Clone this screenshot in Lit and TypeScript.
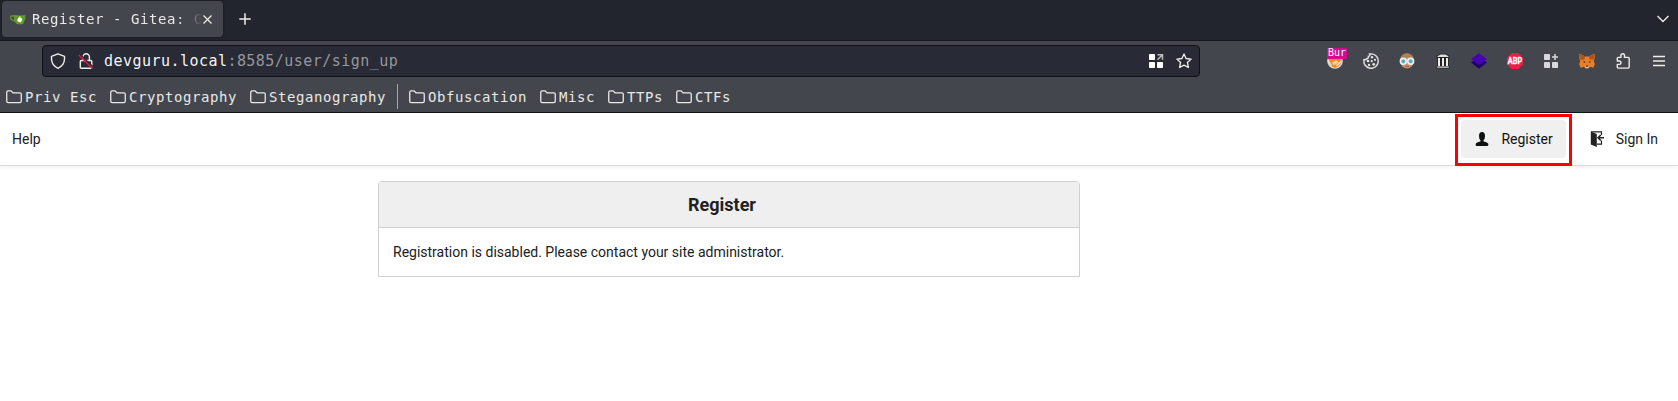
import { LitElement, html, css, svg } from "lit";
import { customElement } from "lit/decorators.js";

const icon = (w: number, h: number, vb: string, body: unknown) =>
  html`<svg width=${w} height=${h} viewBox=${vb} fill="none">${body}</svg>`;

const folder = icon(16, 14, "0 0 16 14", svg`<path d="M.75 11.2V2.3Q.75.9 2.1.9H5l2 1.9h6.9q1.35 0 1.35 1.4v7q0 1.4-1.35 1.4H2.1Q.75 12.6.75 11.2Z" stroke="#e9e9e6" stroke-width="1.3"/>`);

const gitea = icon(16, 11, "0 0 16 11", svg`
  <path d="M5 2H1.600Q.4 2.200.700 4.200 1.200 6.500 5 6.800" stroke="#609926" stroke-width="1.300"/>
  <path d="M4 1q6 .8 11.600 0Q15.800 5 13.600 9q-.6 1.200-2 1.200H7.400Q4.600 9.200 4 5Z" fill="#609926"/>
  <rect x="7.600" y="3.800" width="4.200" height="4.200" rx="1" transform="rotate(22 9.700 5.900)" fill="#fff"/>
  <path d="M9.900 2v3" stroke="#fff" stroke-width=".8"/>`);

const extensions = [
  // Proxy switcher, with its badge
  html`<span class="ext">${icon(16, 16, "0 0 16 16", svg`
    <circle cx="8" cy="8" r="7.800" fill="#d7dbe0"/><path d="M1.200 6.500Q8 3 14.800 6.500 14.600 13 8 15 1.600 13 1.200 6.500Z" fill="#f08a24"/>
    <path d="M.8 7l3.800 5.500M9.500 13l5-5" stroke="#e8eaec" stroke-width="1.300"/><path d="M5 9.600l4-2 2.700 1.300-2.400 2.600-3.300.3z" fill="#fbd09a"/>`)}<span class="badge">Bur</span></span>`,
  icon(16, 16, "0 0 16 16", svg`<path d="M8.300.9A7.200 7.200 0 1 1 1 6.700q1.800.5 2.600-1Q5.800 5.500 5.300 3.400 7.500 3.100 6.500 1Z" stroke="#e3e3e5" stroke-width="1.400"/>
    <g fill="#e3e3e5"><circle cx="9" cy="4.300" r="1.200"/><circle cx="5" cy="8" r="1.300"/><circle cx="12" cy="6.800" r="1.100"/><circle cx="8.700" cy="8.200" r="1.100"/><circle cx="6" cy="12" r="1.200"/><circle cx="10.700" cy="11.300" r="1.400"/></g>`),
  icon(16, 16, "0 0 16 16", svg`<ellipse cx="8" cy="8" rx="6.800" ry="7.500" fill="#c98f6b"/><path d="M1.200 6Q2 .5 8 .5T14.800 6Q8 3 1.200 6Z" fill="#a98452"/>
    <circle cx="4.300" cy="8.300" r="2.900" fill="#68aabd" stroke="#eef4f5" stroke-width="1.600"/><circle cx="11.700" cy="8.300" r="2.900" fill="#68aabd" stroke="#eef4f5" stroke-width="1.600"/><path d="M6 13.300h4" stroke="#a55b43"/>`),
  icon(16, 16, "0 0 16 16", svg`<path d="M1.500 4.600V3L5 .8h6L14.500 3v1.600l-.7.5v7.600l.8.700v2H1.400v-2l.8-.7V5.100z" fill="#222"/><path d="M2.500 3.300L5.500 1.600h5l3 1.700v.6h-11zM2.200 13.600h11.600v1.200H2.200z" fill="#ddd"/><path d="M4 5v8M8 5v8M12 5v8" stroke="#eee" stroke-width="2"/>`),
  icon(16, 16, "0 0 16 16", svg`<path d="M0 9.500L8 4l8 5.500-8 6.200z" fill="#20006e"/><path d="M0 6L8 .3 16 6l-8 5.900z" fill="#4a00b4"/>`),
  icon(16, 16, "0 0 16 16", svg`<path d="M4.700 0h6.600L16 4.700v6.600L11.300 16H4.700L0 11.300V4.700z" fill="#ed1e45"/><text x="8" y="11" font-family="Roboto, sans-serif" font-size="8.500" font-weight="700" fill="#fff" stroke="#fff" stroke-width=".3" text-anchor="middle" textLength="14.400" lengthAdjust="spacingAndGlyphs">ABP</text>`),
  icon(16, 16, "0 0 16 16", svg`<g fill="#d8d8dc"><rect x="1" y="1" width="6" height="6" rx=".8"/><rect x="1" y="9" width="6" height="6" rx=".8"/><rect x="9" y="9" width="6" height="6" rx=".8"/></g><path d="M12 1v6M9 4h6" stroke="#d8d8dc" stroke-width="1.500"/>`),
  icon(16, 16, "0 0 16 16", svg`<path d="M.5.800L6.300 3.500h3.400L15.500.800l.2 4.500-.9 2.700 1 3.100-1.400 3.600-3.500-.9L9.500 15.500h-3L5.100 13.800l-3.500.9L.2 11.100l1-3.100L.3 5.300z" fill="#ed7d22"/><path d="M.5.800L6.300 3.500 5.200 6.800 1 6.500zM15.500.800L9.700 3.500l1.100 3.300 4.200-.3z" fill="#a8571f"/><path d="M3.600 8.800l2.300-.5.400 1.800zM12.400 8.800l-2.300-.5-.4 1.800z" fill="#333b43"/><path d="M6 12.600h4l-.5 2.500h-3z" fill="#d5c6b8"/><path d="M6.600 12.400h2.800l-.5 1.400H7.100z" fill="#222"/>`),
  icon(16, 16, "0 0 16 16", svg`<path d="M5.900 4.400V2.600a1.800 1.800 0 0 1 3.600 0v1.800h3.700q1 0 1 1v8.700q0 1-1 1H3.300q-1 0-1-1v-2.700h2a1.700 1.700 0 0 0 0-3.400h-2V5.400q0-1 1-1z" stroke="#ededea" stroke-width="1.400" stroke-linejoin="round"/>`),
  icon(16, 16, "0 0 16 16", svg`<path d="M2 3.500h12M2 8h12M2 12.500h12" stroke="#ededea" stroke-width="1.300"/>`),
];

@customElement("app-root")
export class AppRoot extends LitElement {
  static styles = css`
    :host { display: block; height: 401px; background: #fff; overflow: hidden; font: 14px/20px Roboto, sans-serif; color: #212121; }
    * { box-sizing: border-box; }
    svg { display: block; flex: none; }
    .tabs, .nav, .bookmarks, .address, .tools, .tab, .site, .item, .mark { display: flex; align-items: center; }
    .tabs, .nav, .bookmarks { font-family: "DejaVu Sans Mono", monospace; color: #e8e8e5; white-space: pre; }
    .tabs { height: 41px; background: #23252e; border-bottom: 1px solid #16181d; padding: 1px 15px 3px 2px; }
    .tab { width: 221px; height: 36px; background: #44464d; border-radius: 4px; padding: 0 10px 0 8px; box-shadow: 0 0 3px #15161c; }
    .title { width: 170px; margin-left: 6px; overflow: hidden; font-size: 14px; letter-spacing: .57px; -webkit-mask-image: linear-gradient(90deg, #000 145px, transparent 170px); mask-image: linear-gradient(90deg, #000 145px, transparent 170px); }
    .plus { margin-left: 16px; }
    .down { margin-left: auto; margin-right: -7px; }
    .nav { height: 40px; background: #44464d; padding: 0 11px 0 42px; }
    .address { width: 1158px; height: 32px; border: 1px solid #101115; border-radius: 4px; background: #282a35; padding: 0 7px; }
    .lock { margin-left: 12px; }
    .url { margin-left: 10px; flex: 1; font-size: 15px; letter-spacing: .46px; color: #96979b; }
    .host { color: #f4f4f2; }
    .star { margin-left: 12px; }
    .tools { margin-left: auto; gap: 20px; }
    .ext { position: relative; }
    .badge { position: absolute; left: 0; top: -5px; width: 20px; height: 11px; background: #d30b90; border-radius: 1px; color: #fff; font: 10px/10px "DejaVu Sans Mono", monospace; text-align: center; }
    .bookmarks { height: 32px; background: #44464d; border-bottom: 1px solid #101115; padding: 0 6px; gap: 13px; font-size: 14px; letter-spacing: .57px; }
    .mark { gap: 3px; }
    .sep { width: 1px; height: 25px; background: #a5a6a9; margin: 0 -2px; }
    .site { height: 53px; border-bottom: 1px solid #dbdbdb; box-shadow: 0 2px 3px rgba(0,0,0,.04); padding: 0 7px 0 12px; }
    .item { height: 38px; border-radius: 4px; padding: 0 13px 0 14px; position: relative; }
    .active { margin-left: auto; margin-right: 10px; background: #f0f0f0; color: #111; }
    .focus { position: absolute; inset: -6px -6.5px -8px -6px; border: 3px solid #f00; }
    .label { margin-left: 12px; }
    .card { width: 702px; margin: 15px 0 0 378px; border: 1px solid #d0d0d1; border-radius: 4px 4px 0 0; }
    h4 { margin: 0; height: 46px; line-height: 46px; padding-right: 14px; font-size: 18px; font-weight: 700; text-align: center; background: #efefef; border-bottom: 1px solid #d0d0d1; border-radius: 3px 3px 0 0; }
    .message { height: 48px; line-height: 48px; padding-left: 14px; }
  `;

  private mark(name: string) {
    return html`<div class="mark">${folder}${name}</div>`;
  }

  render() {
    return html`
      <div class="tabs">
        <div class="tab">${gitea}<div class="title">Register - Gitea: G</div>${icon(11, 11, "0 0 11 11", svg`<path d="M1.500 1.500l8 8m0-8l-8 8" stroke="#ededea" stroke-width="1.200"/>`)}</div>
        <div class="plus">${icon(12, 12, "0 0 12 12", svg`<path d="M6 .3v11.400M.3 6h11.400" stroke="#ededea" stroke-width="1.500"/>`)}</div>
        <div class="down">${icon(14, 10, "0 0 14 10", svg`<path d="M1.500 2l5.500 5.500L12.500 2" stroke="#ededea" stroke-width="1.400"/>`)}</div>
      </div>
      <div class="nav">
        <div class="address">
          ${icon(16, 16, "0 0 16 16", svg`<path d="M8 .8l6.500 2.500v2.800Q14.300 12.500 8 15.300 1.700 12.500 1.500 6.100V3.300z" stroke="#ededea" stroke-width="1.400" stroke-linejoin="round"/>`)}
          <div class="lock">${icon(16, 16, "0 0 16 16", svg`<path d="M5 7V4a3.200 3.200 0 0 1 6.400 0v3M3.300 7.500h9.600q.9 0 .9 1v5.700q0 1-.9 1H3.300q-1 0-1-1V8.500q0-1 1-1z" stroke="#ededea" stroke-width="1.400"/><path d="M2 1.200l14 14" stroke="#282a35" stroke-width="1.600"/><path d="M.8 2l13.500 13.500" stroke="#e8173f" stroke-width="1.400"/>`)}</div>
          <div class="url"><span class="host">devguru.local</span>:8585/user/sign_up</div>
          ${icon(16, 16, "0 0 16 16", svg`<g fill="#fff"><rect x="1" y="1" width="6" height="6" rx=".7"/><rect x="1" y="9" width="6" height="6" rx=".7"/><rect x="9" y="9" width="6" height="6" rx=".7"/></g><path d="M9.500 1.700h5v5M14.200 2L9.500 6.700" stroke="#bcbcc0" stroke-width="1.500"/>`)}
          <div class="star">${icon(16, 16, "0 0 16 16", svg`<path d="M8 .9l2.100 4.600 5 .6-3.700 3.400 1 5L8 12.100l-4.400 2.400 1-5L.9 6.100l5-.6z" stroke="#ededea" stroke-width="1.300" stroke-linejoin="round"/>`)}</div>
        </div>
        <div class="tools">${extensions}</div>
      </div>
      <div class="bookmarks">
        ${["Priv Esc", "Cryptography", "Steganography"].map((n) => this.mark(n))}
        <div class="sep"></div>
        ${["Obfuscation", "Misc", "TTPs", "CTFs"].map((n) => this.mark(n))}
      </div>
      <div class="site">
        <div>Help</div>
        <div class="item active">${icon(14, 14, "0 0 14 14", svg`<path d="M4 4Q4 0 7 0t3 4q0 3-1.400 4v1.500q4.800.8 4.800 3Q13.400 14 12 14H2Q.6 14 .6 12.500q0-2.200 4.800-3V8Q4 7 4 4Z" fill="#111"/>`)}<span class="label">Register</span><span class="focus"></span></div>
        <div class="item">${icon(14, 16, "0 0 14 16", svg`<path d="M.8.500l6 2.500v13l-6-2.500z" fill="#222"/><path d="M1 .9h10.500v3M11.500 9.500v3.600H7" stroke="#222" stroke-width="1.200"/><path d="M14 6.800H8.500M10.800 4L8 6.800l2.800 2.700" stroke="#222" stroke-width="1.500"/>`)}<span class="label">Sign In</span></div>
      </div>
      <div class="card"><h4>Register</h4><div class="message">Registration is disabled. Please contact your site administrator.</div></div>
    `;
  }
}
